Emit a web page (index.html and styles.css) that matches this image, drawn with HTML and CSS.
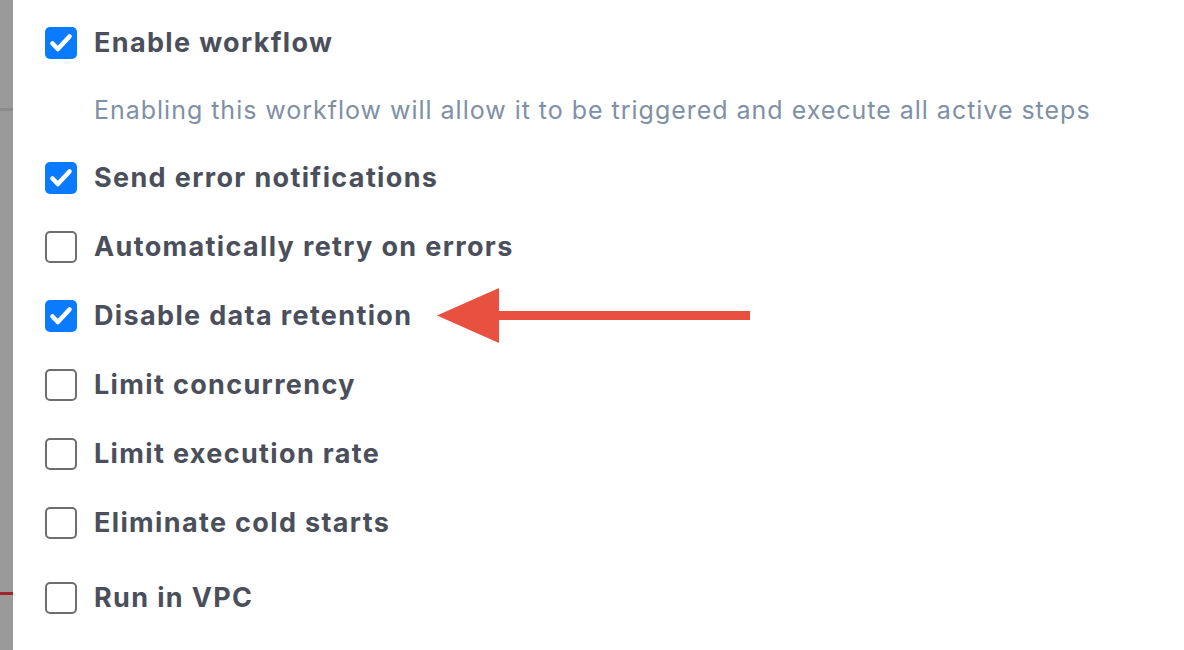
FILE: index.html
```html
<!DOCTYPE html>
<html lang="en">
<head>
<meta charset="utf-8">
<title>Workflow settings</title>
<link rel="stylesheet" href="styles.css">
</head>
<body>
<div class="page">
  <aside class="backdrop">
    <span class="line line-top"></span>
    <span class="line line-red"></span>
  </aside>
  <main class="panel">
    <ul class="options">
      <li class="option">
        <span class="box checked"><svg viewBox="0 0 32 32"><path d="M7.5 16.5 L12.8 22 L24.5 9.5"/></svg></span>
        <span class="label">Enable workflow</span>
      </li>
      <li class="desc">Enabling this workflow will allow it to be triggered and execute all active steps</li>
      <li class="option">
        <span class="box checked"><svg viewBox="0 0 32 32"><path d="M7.5 16.5 L12.8 22 L24.5 9.5"/></svg></span>
        <span class="label">Send error notifications</span>
      </li>
      <li class="option">
        <span class="box"></span>
        <span class="label">Automatically retry on errors</span>
      </li>
      <li class="option marked">
        <span class="box checked"><svg viewBox="0 0 32 32"><path d="M7.5 16.5 L12.8 22 L24.5 9.5"/></svg></span>
        <span class="label">Disable data retention</span>
        <svg class="arrow" viewBox="0 0 316 56" width="316" height="56">
          <rect x="60" y="23" width="253" height="9" fill="#E8503F"/>
          <polygon points="0,27.5 62,0 62,55" fill="#E8503F"/>
        </svg>
      </li>
      <li class="option">
        <span class="box"></span>
        <span class="label">Limit concurrency</span>
      </li>
      <li class="option">
        <span class="box"></span>
        <span class="label">Limit execution rate</span>
      </li>
      <li class="option">
        <span class="box"></span>
        <span class="label">Eliminate cold starts</span>
      </li>
      <li class="option last">
        <span class="box"></span>
        <span class="label">Run in VPC</span>
      </li>
    </ul>
  </main>
</div>
</body>
</html>
```

FILE: styles.css
```css
* { box-sizing: border-box; }
html, body { margin: 0; padding: 0; }
body {
  background: #ffffff;
  font-family: Inter, "Noto Sans", "Liberation Sans", sans-serif;
}
.page {
  display: flex;
  width: 1184px;
  height: 650px;
  overflow: hidden;
}
.backdrop {
  position: relative;
  width: 13px;
  flex: none;
  background: #9a9a9a;
}
.line {
  position: absolute;
  left: 0;
  right: 0;
  height: 3px;
}
.line-top { top: 108px; background: #8a8a8a; }
.line-red { top: 592px; background: #a1262a; }
.panel {
  flex: 1;
  background: #ffffff;
  padding: 8px 0 0 32px;
}
.options {
  list-style: none;
  margin: 0;
  padding: 0;
}
.option {
  position: relative;
  display: flex;
  align-items: center;
  height: 69px;
  gap: 17px;
}
.option.last { margin-top: 6px; }
.box {
  width: 32px;
  height: 32px;
  flex: none;
  border: 2px solid #6e6e6e;
  border-radius: 5px;
  background: #fff;
  display: flex;
}
.box.checked {
  border: none;
  background: #0a7aff;
}
.box svg {
  width: 32px;
  height: 32px;
}
.box svg path {
  fill: none;
  stroke: #fff;
  stroke-width: 4.6;
  stroke-linecap: round;
  stroke-linejoin: round;
}
.label {
  font-size: 27px;
  font-weight: 700;
  color: #4a4f5b;
  letter-spacing: 1.35px;
}
.desc {
  height: 66px;
  display: flex;
  align-items: center;
  padding-left: 49px;
  font-size: 25px;
  letter-spacing: 0.98px;
  color: #8090a4;
}
.arrow {
  position: absolute;
  left: 392px;
  top: 50%;
  margin-top: -28px;
}
```
